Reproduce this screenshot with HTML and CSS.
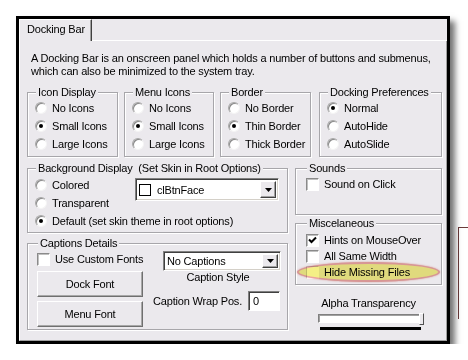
FILE: index.html
```html
<!DOCTYPE html>
<html lang="en">
<head>
  <meta charset="UTF-8">
  <title>Docking Bar</title>
  <link rel="stylesheet" href="styles.css">
</head>
<body>

<div class="behind"></div>

<div class="window">
  <div class="tabs">
    <div class="tab">Docking Bar</div>
    <div class="tab-rest"></div>
  </div>

  <div class="page">
    <p class="desc">A Docking Bar is an onscreen panel which holds a number of buttons and submenus,<br>which can also be minimized to the system tray.</p>

    <div class="row1">
      <fieldset class="group g-icon">
        <legend>Icon Display</legend>
        <div class="opt"><span class="radio"></span>No Icons</div>
        <div class="opt"><span class="radio on"></span>Small Icons</div>
        <div class="opt"><span class="radio"></span>Large Icons</div>
      </fieldset>
      <fieldset class="group g-menu">
        <legend>Menu Icons</legend>
        <div class="opt"><span class="radio"></span>No Icons</div>
        <div class="opt"><span class="radio on"></span>Small Icons</div>
        <div class="opt"><span class="radio"></span>Large Icons</div>
      </fieldset>
      <fieldset class="group g-border">
        <legend>Border</legend>
        <div class="opt"><span class="radio"></span>No Border</div>
        <div class="opt"><span class="radio on"></span>Thin Border</div>
        <div class="opt"><span class="radio"></span>Thick Border</div>
      </fieldset>
      <fieldset class="group g-dock">
        <legend>Docking Preferences</legend>
        <div class="opt"><span class="radio on"></span>Normal</div>
        <div class="opt"><span class="radio"></span>AutoHide</div>
        <div class="opt"><span class="radio"></span>AutoSlide</div>
      </fieldset>
    </div>

    <div class="row2">
      <div class="col-left">
        <fieldset class="group g-bg">
          <legend>Background Display&nbsp; (Set Skin in Root Options)</legend>
          <div class="bg-body">
            <div class="bg-opts">
              <div class="opt"><span class="radio"></span>Colored</div>
              <div class="opt"><span class="radio"></span>Transparent</div>
              <div class="opt"><span class="radio on"></span>Default (set skin theme in root options)</div>
            </div>
            <div class="combo combo-color">
              <span class="swatch"></span>
              <span class="combo-text">clBtnFace</span>
              <span class="drop"><svg width="7" height="4" viewBox="0 0 7 4"><polygon points="0,0 7,0 3.5,4" fill="#000"/></svg></span>
            </div>
          </div>
        </fieldset>

        <fieldset class="group g-cap">
          <legend>Captions Details</legend>
          <div class="cap-body">
            <div class="cap-left">
              <div class="chk-row"><span class="chk"></span>Use Custom Fonts</div>
              <button class="btn">Dock Font</button>
              <button class="btn">Menu Font</button>
            </div>
            <div class="cap-right">
              <div class="combo combo-cap">
                <span class="combo-text">No Captions</span>
                <span class="drop"><svg width="7" height="4" viewBox="0 0 7 4"><polygon points="0,0 7,0 3.5,4" fill="#000"/></svg></span>
              </div>
              <div class="cap-label">Caption Style</div>
              <div class="wrap-row">
                <span>Caption Wrap Pos.</span>
                <span class="edit">0</span>
              </div>
            </div>
          </div>
        </fieldset>
      </div>

      <div class="col-right">
        <fieldset class="group g-sound">
          <legend>Sounds</legend>
          <div class="chk-row"><span class="chk"></span>Sound on Click</div>
        </fieldset>

        <fieldset class="group g-misc">
          <legend>Miscelaneous</legend>
          <div class="chk-row"><span class="chk on"><svg width="9" height="8" viewBox="0 0 9 8"><polyline points="1,3.5 3.5,6 8,1.5" fill="none" stroke="#000" stroke-width="2"/></svg></span>Hints on MouseOver</div>
          <div class="chk-row"><span class="chk"></span>All Same Width</div>
          <div class="chk-row marked"><span class="chk dim"></span>Hide Missing Files<span class="highlight"></span></div>
        </fieldset>

        <div class="alpha">Alpha Transparency</div>
        <div class="slider"><span class="thumb"></span></div>
        <div class="ticks"></div>
      </div>
    </div>
  </div>
</div>

</body>
</html>
```

FILE: styles.css
```css
body {
  margin: 0;
  background: #fff;
  font-family: 'Liberation Sans', Arial, sans-serif;
  font-size: 11px;
  letter-spacing: -0.18px;
  color: #000;
}

.behind {
  position: absolute;
  left: 458px;
  top: 227px;
  width: 20px;
  height: 91px;
  border-left: 1px solid #6b3b3b;
  border-top: 1px solid #6b3b3b;
}

.window {
  position: relative;
  width: 428px;
  height: 322px;
  margin: 16px 0 0 16px;
  border: 3px solid #000;
  background: #ebe9ed;
  box-shadow: 5px 5px 6px rgba(0,0,0,0.55);
  display: flex;
  flex-direction: column;
}

.tabs {
  display: flex;
  height: 22px;
  flex: none;
}

.tab {
  width: 73px;
  box-sizing: border-box;
  padding: 3px 0 0 7px;
  border-top: 1px solid #fff;
  border-left: 1px solid #fff;
  border-right: 1px solid #404040;
  box-shadow: inset -1px 0 #a0a0a0;
  line-height: 13px;
}

.tab-rest {
  flex: 1;
  border-bottom: 1px solid #fff;
}

.page {
  flex: 1;
  min-height: 0;
  border-left: 1px solid #fff;
  border-right: 1px solid #a0a0a0;
  border-bottom: 1px solid #a0a0a0;
  padding: 11px 4px 0 7px;
}

.desc {
  margin: 0;
  line-height: 13px;
  padding-left: 4px;
  white-space: nowrap;
}

.group {
  margin: 0;
  padding: 0 6px 3px 7px;
  border: 1px solid #a7a6aa;
  box-shadow: inset 1px 1px #fff, 1px 1px #fff;
  min-width: 0;
  box-sizing: border-box;
}

.group legend {
  padding: 0 2px;
  margin-left: 1px;
  line-height: 13px;
  background: #ebe9ed;
  white-space: nowrap;
}

.row1 {
  display: flex;
  margin-top: 8px;
}

.g-icon { width: 91px; }
.g-menu { width: 90px; margin-left: 6px; }
.g-border { width: 91px; margin-left: 6px; }
.g-dock { width: 123px; margin-left: 8px; }

.opt {
  display: flex;
  align-items: center;
  gap: 5px;
  height: 18px;
  white-space: nowrap;
}

.radio {
  flex: none;
  position: relative;
  width: 12px;
  height: 12px;
  box-sizing: border-box;
  border-radius: 50%;
  background: #fff;
  border: 1px solid;
  border-color: #a8a8a8 #f4f4f4 #f4f4f4 #a8a8a8;
  box-shadow: inset 1px 1px 0 #8a8a8a;
}

.radio.on::after {
  content: "";
  position: absolute;
  left: 3px;
  top: 3px;
  width: 4px;
  height: 4px;
  border-radius: 50%;
  background: #000;
}

.row2 {
  display: flex;
  gap: 7px;
  margin-top: 5px;
}

.col-left {
  width: 261px;
}

.col-right {
  width: 147px;
}

.g-bg {
  padding-top: 1px;
  padding-bottom: 2px;
}

.bg-body {
  display: flex;
}

.bg-opts {
  width: 100px;
}

.combo {
  display: flex;
  align-items: center;
  box-sizing: border-box;
  background: #fff;
  border: 1px solid;
  border-color: #808080 #fff #fff #808080;
  box-shadow: inset 1px 1px #404040, inset -1px -1px #d4d0c8;
  padding: 0 2px 0 3px;
  white-space: nowrap;
}

.combo-color {
  width: 144px;
  height: 23px;
  margin-top: 2px;
}

.swatch {
  width: 12px;
  height: 12px;
  box-sizing: border-box;
  border: 1px solid #000;
  background: #fff;
  margin-right: 6px;
}

.combo-text {
  flex: 1;
}

.drop {
  width: 16px;
  height: calc(100% - 4px);
  box-sizing: border-box;
  display: flex;
  align-items: center;
  justify-content: center;
  background: #ebe9ed;
  border: 1px solid;
  border-color: #fff #404040 #404040 #fff;
  box-shadow: inset -1px -1px #a0a0a0;
}

.g-cap {
  margin-top: 4px;
  padding-left: 9px;
  padding-bottom: 2px;
}

.cap-body {
  display: flex;
  gap: 10px;
}

.cap-left {
  width: 106px;
  padding-top: 1px;
}

.chk-row {
  display: flex;
  align-items: center;
  gap: 5px;
  height: 16px;
  white-space: nowrap;
}

.chk {
  flex: none;
  width: 13px;
  height: 13px;
  box-sizing: border-box;
  background: #fff;
  border: 1px solid;
  border-color: #8a8a8a #fff #fff #8a8a8a;
  box-shadow: inset 1px 1px #c0c0c0;
  display: flex;
  align-items: center;
  justify-content: center;
}

.chk.dim {
  border-color: #c8c8c8 #fff #fff #c8c8c8;
  box-shadow: none;
}

.btn {
  display: block;
  width: 106px;
  height: 26px;
  margin-top: 4px;
  padding: 0;
  font: inherit;
  letter-spacing: inherit;
  color: #000;
  background: #ebe9ed;
  border: 1px solid;
  border-color: #fff #6f6f6f #6f6f6f #fff;
  box-shadow: inset -1px -1px #a8a8a8;
}

.cap-right {
  width: 128px;
  padding-top: 1px;
}

.combo-cap {
  width: 118px;
  height: 20px;
  margin-left: 10px;
}

.cap-label {
  line-height: 13px;
  text-align: center;
  padding-left: 2px;
}

.wrap-row {
  display: flex;
  align-items: center;
  gap: 6px;
  height: 20px;
  margin-top: 7px;
  white-space: nowrap;
}

.edit {
  width: 32px;
  height: 20px;
  box-sizing: border-box;
  background: #fff;
  border: 1px solid;
  border-color: #808080 #fff #fff #808080;
  box-shadow: inset 1px 1px #404040;
  padding: 2px 0 0 4px;
  line-height: 14px;
}

.g-sound {
  padding: 1px 6px 22px 10px;
}

.g-misc {
  margin-top: 2px;
  padding: 2px 6px 4px 10px;
}

.marked {
  position: relative;
}

.highlight {
  position: absolute;
  left: -9px;
  top: -2px;
  width: 143px;
  height: 20px;
  box-sizing: border-box;
  border-radius: 50%;
  background: #f4ef86;
  border: 2px solid #eaa4a0;
  box-shadow: 0 0 2px #eaa4a0;
  mix-blend-mode: multiply;
}

.alpha {
  margin-top: 12px;
  line-height: 13px;
  text-align: center;
}

.slider {
  position: relative;
  width: 106px;
  height: 9px;
  box-sizing: border-box;
  margin: 4px 0 0 23px;
  background: #fff;
  border: 1px solid;
  border-color: #808080 #fff #fff #808080;
  box-shadow: inset 1px 1px #a0a0a0;
}

.thumb {
  position: absolute;
  right: -1px;
  top: -2px;
  width: 5px;
  height: 12px;
  box-sizing: border-box;
  background: #ebe9ed;
  border: 1px solid;
  border-color: #fff #505050 #505050 #fff;
}

.ticks {
  width: 101px;
  height: 3px;
  margin: 4px 0 0 25px;
  background: #000;
}
```
